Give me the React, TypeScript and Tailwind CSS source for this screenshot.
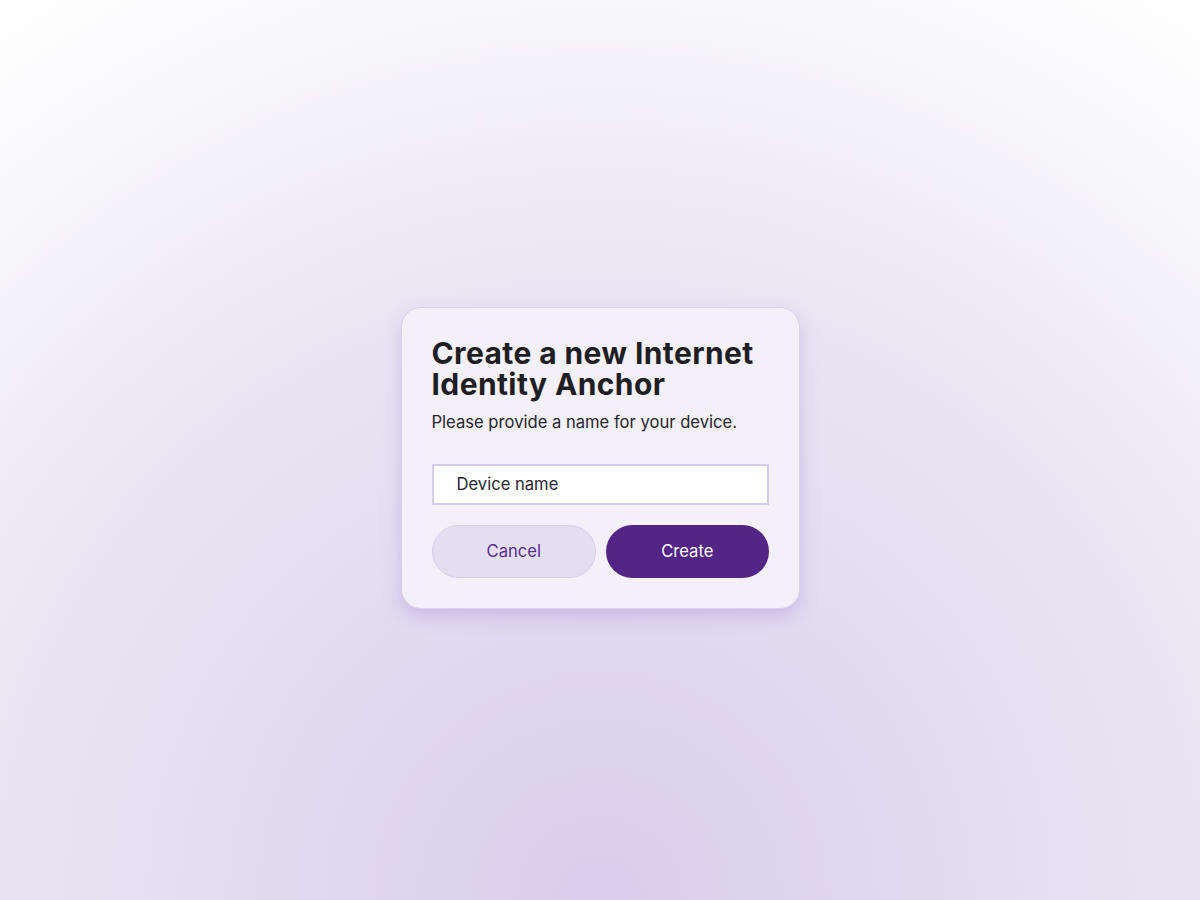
export default function App() {
  return (
    <div
      className="w-full h-[900px] pt-[15px] flex items-center justify-center bg-[radial-gradient(circle_farthest-corner_at_50%_100%,#d8cdeb_0%,#dfd6ee_20%,#e5dff1_40%,#e9e4f3_55%,#f0edf7_70%,#f8f7fb_83%,#ffffff_100%)]"
      style={{ fontFamily: "Inter, 'Noto Sans', sans-serif" }}
    >
      <div className="w-[399px] rounded-[20px] border border-[#d8d0ef] bg-[#f3f0f9] pl-[30px] pr-[30px] pt-[30px] pb-[30px] shadow-[0_8px_18px_rgba(160,130,210,0.35)]">
        <h1 className="text-[30px] leading-[31px] font-bold text-[#1f1e24] tracking-[0.4px]">
          Create a new Internet Identity Anchor
        </h1>
        <p className="mt-[10px] text-[16.6px] leading-[24px] text-[#29272f]">
          Please provide a name for your device.
        </p>
        <div className="mt-[30px] h-[41px] border-2 border-[#d6cdee] bg-white flex items-center pl-[23px]">
          <span className="text-[16.6px] text-[#29272f]">Device name</span>
        </div>
        <div className="mt-[20px] flex gap-[10px]">
          <button className="flex-1 h-[53px] rounded-full border border-[#d6cdee] bg-[#e3dff1] text-[#5a2d91] text-[16.6px]">
            Cancel
          </button>
          <button className="flex-1 h-[53px] rounded-full bg-[#532586] text-white text-[16.6px]">
            Create
          </button>
        </div>
      </div>
    </div>
  );
}
